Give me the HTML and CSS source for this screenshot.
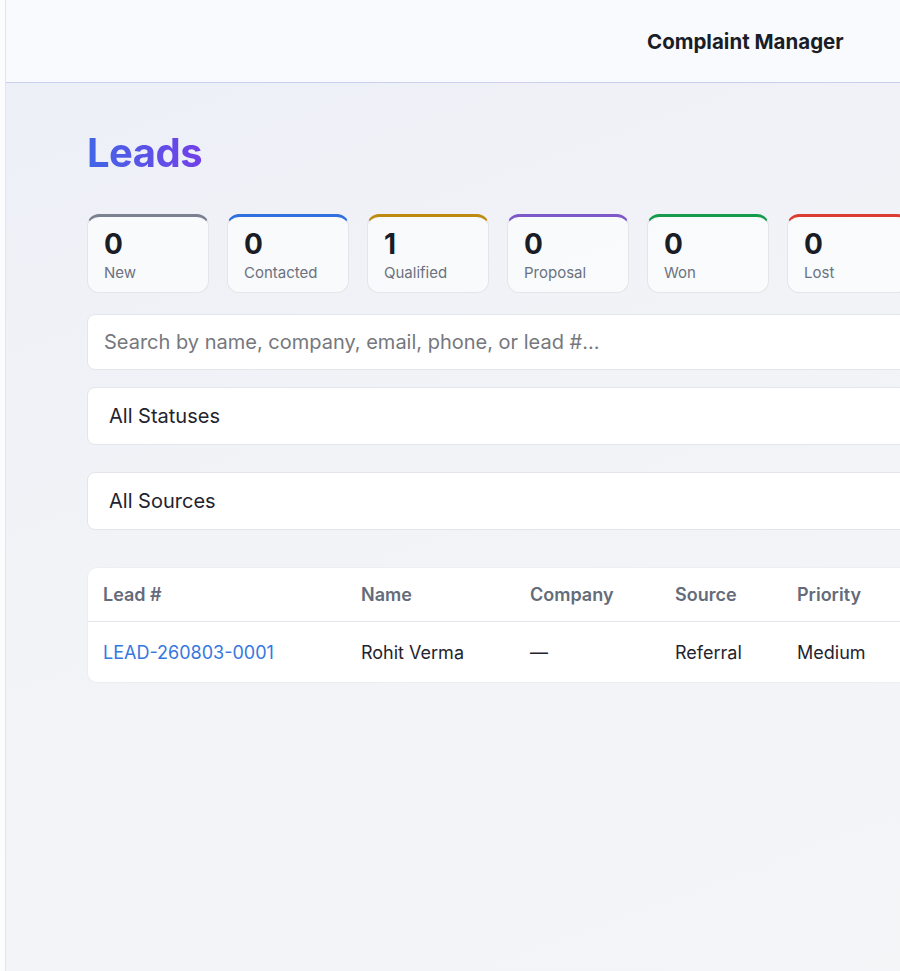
FILE: index.html
```html
<!DOCTYPE html>
<html lang="en">
<head>
<meta charset="utf-8">
<title>Leads</title>
<link rel="stylesheet" href="styles.css">
</head>
<body>
<div class="app">
  <aside class="sidebar"></aside>
  <main class="main">
    <header class="topbar">
      <div class="brand">Complaint Manager</div>
    </header>
    <section class="content">
      <h1 class="title">Leads</h1>
      <div class="stats">
        <div class="stat stat-new"><div class="num">0</div><div class="lbl">New</div></div>
        <div class="stat stat-contacted"><div class="num">0</div><div class="lbl">Contacted</div></div>
        <div class="stat stat-qualified"><div class="num">1</div><div class="lbl">Qualified</div></div>
        <div class="stat stat-proposal"><div class="num">0</div><div class="lbl">Proposal</div></div>
        <div class="stat stat-won"><div class="num">0</div><div class="lbl">Won</div></div>
        <div class="stat stat-lost"><div class="num">0</div><div class="lbl">Lost</div></div>
      </div>
      <input class="search" type="text" placeholder="Search by name, company, email, phone, or lead #...">
      <div class="select">All Statuses</div>
      <div class="select select-gap">All Sources</div>
      <div class="table-card">
        <table class="leads">
          <thead>
            <tr>
              <th class="c-lead">Lead #</th>
              <th class="c-name">Name</th>
              <th class="c-company">Company</th>
              <th class="c-source">Source</th>
              <th class="c-priority">Priority</th>
              <th class="c-rest"></th>
            </tr>
          </thead>
          <tbody>
            <tr>
              <td><a class="lead-link" href="#">LEAD-260803-0001</a></td>
              <td>Rohit Verma</td>
              <td>—</td>
              <td>Referral</td>
              <td>Medium</td>
              <td></td>
            </tr>
          </tbody>
        </table>
      </div>
    </section>
  </main>
</div>
</body>
</html>
```

FILE: styles.css
```css
html, body {
  margin: 0;
  padding: 0;
  height: 100%;
  overflow: hidden;
}
body {
  font-family: Inter, "Noto Sans", "Liberation Sans", sans-serif;
  color: #1f2430;
  background: linear-gradient(160deg, #eceff7 0%, #f2f3f7 45%, #f4f5f7 100%);
}
.app {
  display: flex;
  width: 1300px;
  min-height: 971px;
}
.sidebar {
  width: 5px;
  flex: 0 0 5px;
  background: #fbfcfe;
  border-right: 1px solid #e3e5ea;
}
.main {
  flex: 1;
  display: flex;
  flex-direction: column;
}
.topbar {
  height: 82px;
  border-bottom: 1px solid #c9d0ee;
  background: rgba(250, 251, 254, 0.9);
  display: flex;
  align-items: center;
  padding-left: 641px;
}
.brand {
  font-size: 20.5px;
  font-weight: 700;
  color: #1a1d26;
}
.content {
  padding: 0 0 0 81px;
}
.title {
  margin: 46px 0 0 0;
  font-size: 40px;
  line-height: 48px;
  font-weight: 700;
  letter-spacing: -0.5px;
  background: linear-gradient(90deg, #4166e6 0%, #7340e8 100%);
  -webkit-background-clip: text;
  background-clip: text;
  color: transparent;
  display: inline-block;
}
.stats {
  display: flex;
  gap: 18px;
  margin-top: 37px;
}
.stat {
  width: 122px;
  flex: 0 0 122px;
  height: 79px;
  box-sizing: border-box;
  background: rgba(250, 251, 253, 0.85);
  border: 1px solid #e3e5ea;
  border-top: 3px solid #7b8091;
  border-radius: 12px;
  padding: 11px 15px 0 16px;
}
.stat-new { border-top-color: #7c8192; }
.stat-contacted { border-top-color: #2f6fe0; }
.stat-qualified { border-top-color: #bd8a12; }
.stat-proposal { border-top-color: #7d58c9; }
.stat-won { border-top-color: #169b4c; }
.stat-lost { border-top-color: #dc3d32; }
.num {
  font-size: 28px;
  line-height: 32px;
  font-weight: 700;
  color: #1a1d26;
}
.lbl {
  font-size: 15px;
  line-height: 20px;
  color: #6b7280;
  margin-top: 3px;
}
.search {
  display: block;
  margin-top: 21px;
  width: 1000px;
  height: 56px;
  box-sizing: border-box;
  border: 1px solid #e3e5ea;
  border-radius: 8px;
  background: #ffffff;
  padding: 0 16px;
  font-family: inherit;
  font-size: 20px;
  color: #1f2430;
  outline: none;
}
.search::placeholder {
  color: #76787d;
}
.select {
  margin-top: 17px;
  width: 1000px;
  height: 58px;
  box-sizing: border-box;
  border: 1px solid #e3e5ea;
  border-radius: 8px;
  background: #ffffff;
  padding: 0 21px;
  display: flex;
  align-items: center;
  font-size: 20px;
  color: #1f2430;
}
.select-gap {
  margin-top: 27px;
}
.table-card {
  margin-top: 37px;
  width: 1000px;
  background: #ffffff;
  border-radius: 10px;
  border: 1px solid #eceef2;
  overflow: hidden;
}
.leads {
  border-collapse: collapse;
  width: 100%;
  font-size: 18px;
}
.leads th {
  text-align: left;
  font-weight: 600;
  color: #646b7a;
  height: 53px;
  padding: 0 15px;
  border-bottom: 1px solid #e3e5ea;
}
.leads td {
  height: 60px;
  padding: 0 15px;
  color: #1f2430;
}
.c-lead { width: 228px; }
.c-name { width: 139px; }
.c-company { width: 115px; }
.c-source { width: 92px; }
.c-priority { width: 110px; }
.lead-link {
  color: #3577df;
  text-decoration: none;
}
```
